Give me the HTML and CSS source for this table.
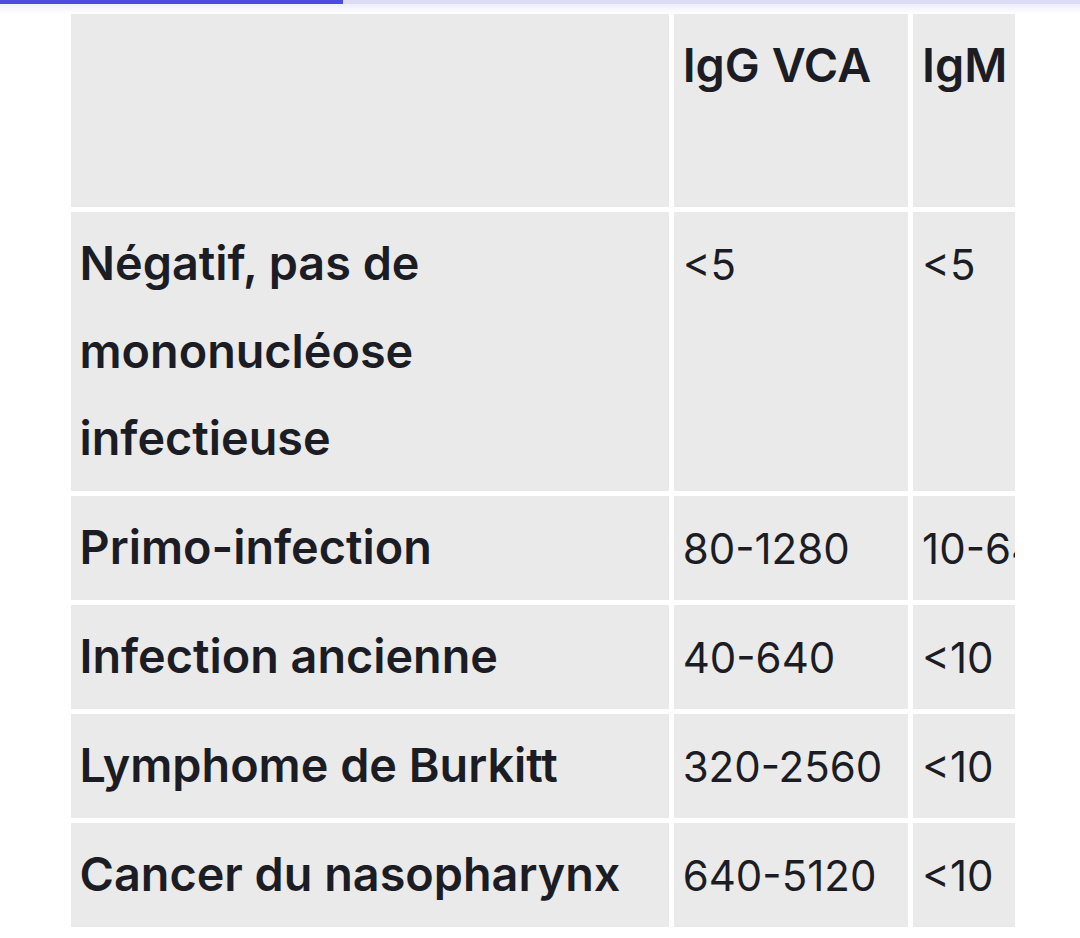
FILE: index.html
```html
<!DOCTYPE html>
<html lang="fr">
<head>
<meta charset="utf-8">
<title>Sérologie EBV</title>
<link rel="stylesheet" href="styles.css">
</head>
<body>
<div class="progress"><div class="progress-fill"></div></div>
<div class="table-wrap">
  <table class="sero">
    <thead>
      <tr>
        <th class="c-label"></th>
        <th class="c-val">IgG VCA</th>
        <th class="c-val">IgM VCA</th>
        <th class="c-val">IgG EA (anti-D)</th>
        <th class="c-val">IgG EBNA</th>
      </tr>
    </thead>
    <tbody>
      <tr>
        <th scope="row">Négatif, pas de mononucléose infectieuse</th>
        <td>&lt;5</td><td>&lt;5</td><td>&lt;5</td><td>&lt;2,5</td>
      </tr>
      <tr>
        <th scope="row">Primo-infection</th>
        <td>80-1280</td><td>10-640</td><td>10-160</td><td>&lt;2,5</td>
      </tr>
      <tr>
        <th scope="row">Infection ancienne</th>
        <td>40-640</td><td>&lt;10</td><td>&lt;10</td><td>10-80</td>
      </tr>
      <tr>
        <th scope="row">Lymphome de Burkitt</th>
        <td>320-2560</td><td>&lt;10</td><td>80-1280</td><td>10-160</td>
      </tr>
      <tr>
        <th scope="row">Cancer du nasopharynx</th>
        <td>640-5120</td><td>&lt;10</td><td>40-640</td><td>20-320</td>
      </tr>
    </tbody>
  </table>
</div>
</body>
</html>
```
FILE: styles.css
```css
html, body {
  margin: 0;
  padding: 0;
  background: #ffffff;
}

body {
  font-family: Inter, "Noto Sans", "Liberation Sans", sans-serif;
  color: #1c1d24;
  height: 938px;
  overflow: hidden;
}

.progress {
  position: fixed;
  top: 0;
  left: 0;
  right: 0;
  height: 4px;
  background: #dcdcf7;
  z-index: 10;
}

.progress::after {
  content: "";
  position: absolute;
  left: 0;
  right: 0;
  top: 4px;
  height: 10px;
  background: linear-gradient(to bottom, rgba(236, 236, 252, 0.9), rgba(255, 255, 255, 0));
}

.progress-fill {
  width: 343px;
  height: 4px;
  background: #4b4be3;
}

.table-wrap {
  margin: 8.5px 0 0 65.5px;
  width: 949.5px;
  overflow: hidden;
}

.sero {
  border-collapse: separate;
  border-spacing: 5.5px;
  table-layout: fixed;
  width: 1566px;
  font-size: 46.75px;
  line-height: 87.5px;
}

.sero th,
.sero td {
  box-sizing: border-box;
  background: #eaeaea;
  padding: 8.25px 9px;
  text-align: left;
  vertical-align: top;
}

.sero thead th {
  height: 193.5px;
  font-weight: 600;
}

.sero .c-label {
  width: 597px;
}

.sero .c-val {
  width: 234px;
}

.sero tbody th {
  font-weight: 600;
}

.sero td {
  font-size: 42px;
  font-weight: 400;
  white-space: nowrap;
  padding-top: 8.75px;
  padding-bottom: 7.75px;
}
```
